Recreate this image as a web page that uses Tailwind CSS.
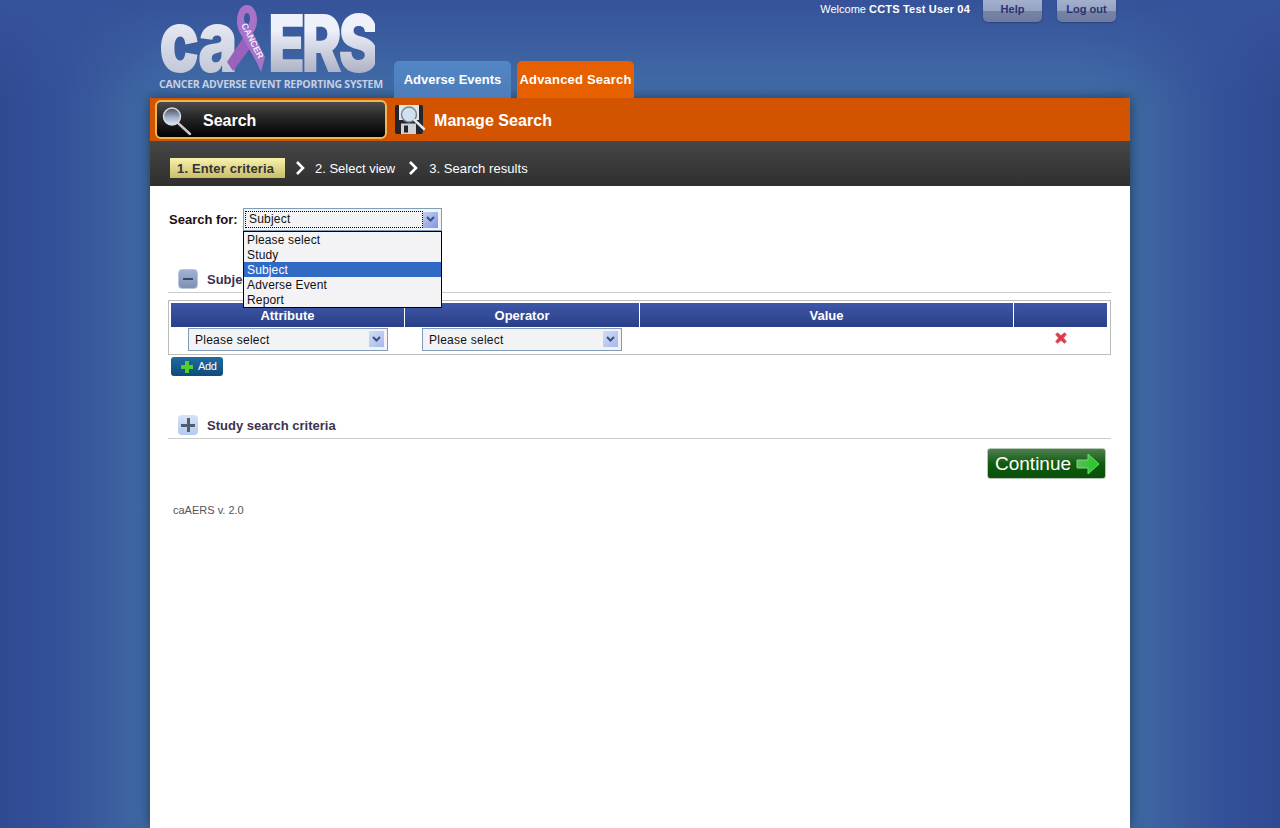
<!DOCTYPE html>
<html lang="en">

<head>
  <meta charset="UTF-8" />
  <meta name="viewport" content="width=device-width, initial-scale=1.0" />
  <title>caAERS - Advanced Search</title>
  <script src="https://cdn.jsdelivr.net/npm/@tailwindcss/browser@4"></script>
</head>

<body class="h-screen overflow-hidden font-['Liberation_Sans',Arial,sans-serif] bg-[linear-gradient(180deg,#36529a,#36529a00_105px),linear-gradient(90deg,#304a91_0,#33519a_60px,#3a5b9c_100px,#3f6aa5_150px,#4270a9_200px,#4270a9_1080px,#3f6aa5_1130px,#3a5b9c_1180px,#33519a_1220px,#304a91_1280px)]">
  <div class="w-[980px] mx-auto">

    <!-- header -->
    <div class="relative h-[98px] flex items-end pl-[244px]">
      <div class="absolute left-[9px] top-0 w-[226px] h-[94px] font-['Inter',sans-serif]">
        <span class="absolute left-0 top-[9px] origin-left scale-x-[0.78] text-[86px] leading-[64px] font-black tracking-[-3px] text-transparent bg-clip-text bg-[linear-gradient(180deg,#f0f2fa,#c3c8d8)]">ca</span>
        <span class="absolute left-[109px] top-[11px] origin-left scale-x-[0.76] text-[80px] leading-[64px] font-black tracking-[-5px] text-transparent bg-clip-text bg-[linear-gradient(180deg,#eef0fa_30%,#a9aec2)]">ERS</span>
        <svg class="absolute left-[67px] top-[5px]" width="40" height="68" viewBox="0 0 40 68">
          <path d="M19 30L1 57l6 9 18-24z" fill="#9a62bd" />
          <path fill-rule="evenodd" d="M21 0C14 0 11 8 11 17c0 4 1 7 3 11l17 30 4 9 4-15-12-24c3-5 4-8 4-13C31 7 27 0 21 0zm0 8c2 0 3 3 3 6s-2 6-3 9c-1-3-3-6-3-9s1-6 3-6z" fill="#a872c8" />
          <text x="0" y="0" transform="translate(15 20) rotate(63)" font-size="9" font-weight="700" fill="#f3eafa" font-family="Liberation Sans">CANCER</text>
        </svg>
        <div class="absolute left-0 top-[78px] w-[226px] text-[10.5px] leading-[13px] font-bold text-[#c8cfe0] whitespace-nowrap font-['Open_Sans',sans-serif] tracking-[-0.24px]">CANCER ADVERSE EVENT REPORTING SYSTEM</div>
      </div>

      <div class="absolute right-[14px] top-0 flex items-start text-[11px]">
        <span class="text-white leading-[18px] mr-[13px]">Welcome <b class="tracking-[0.2px]">CCTS Test User 04</b></span>
        <a class="w-[59px] h-[22px] mr-[15px] rounded-b-[5px] text-center font-bold leading-[19px] text-[#2d3170] bg-[linear-gradient(180deg,#a3b0cd_0,#95a3c4_48%,#77859f_50%,#6c7aa6_100%)] shadow-[0_1px_2px_#2a3f7a]">Help</a>
        <a class="w-[59px] h-[22px] rounded-b-[5px] text-center font-bold leading-[19px] text-[#2d3170] bg-[linear-gradient(180deg,#a3b0cd_0,#95a3c4_48%,#77859f_50%,#6c7aa6_100%)] shadow-[0_1px_2px_#2a3f7a]">Log out</a>
      </div>

      <div class="flex gap-[6px]">
        <a class="w-[117px] h-[37px] rounded-t-[5px] bg-[linear-gradient(180deg,#5286c6,#4d7db9)] text-white text-[13px] font-bold leading-[37px] text-center">Adverse Events</a>
        <a class="w-[117px] h-[37px] rounded-t-[5px] bg-[#e66000] text-white text-[13px] font-bold tracking-[0.2px] leading-[37px] text-center whitespace-nowrap">Advanced Search</a>
      </div>
    </div>

    <!-- main panel -->
    <div class="h-[730px] bg-white shadow-[0_0_12px_#1f3a55]">
      <div class="h-[43px] bg-[#d35400] flex items-center pl-[5px]">
        <div class="w-[232px] h-[39px] flex items-center rounded-[6px] border-2 border-[#f2b650] bg-[linear-gradient(180deg,#4c4c4c,#2a2a2a_40%,#000)]">
          <svg class="ml-[3px]" width="32" height="32" viewBox="0 0 32 32">
            <defs>
              <linearGradient id="lens" x1="0" y1="0" x2="0" y2="1">
                <stop offset="0" stop-color="#4a4f58" />
                <stop offset="0.55" stop-color="#9fb0c8" />
                <stop offset="1" stop-color="#dfe8f5" />
              </linearGradient>
            </defs>
            <line x1="18" y1="19" x2="30" y2="30" stroke="#c8c8c8" stroke-width="2.500" stroke-linecap="round" />
            <circle cx="12" cy="12.500" r="8.500" fill="url(#lens)" stroke="#d9dde2" stroke-width="1.500" />
          </svg>
          <span class="ml-[11px] mt-[2px] text-white text-[16px] font-bold">Search</span>
        </div>
        <svg class="ml-[7px]" width="34" height="32" viewBox="0 0 34 32">
          <rect x="1" y="1" width="28" height="29" rx="2" fill="#23262d" />
          <rect x="5" y="1" width="20" height="15" fill="#e4e6ea" />
          <rect x="7" y="19.500" width="15" height="10.500" fill="#cfd2d6" />
          <rect x="10" y="21.500" width="4" height="7" fill="#23262d" />
          <circle cx="15" cy="10.500" r="7.500" fill="#cfe0ef" stroke="#7d8894" stroke-width="1.500" />
          <line x1="20.500" y1="16" x2="30" y2="25" stroke="#e8e8e8" stroke-width="2.500" stroke-linecap="round" />
        </svg>
        <span class="ml-[6px] mt-[2px] text-white text-[16px] font-bold tracking-[0.05px]">Manage Search</span>
      </div>

      <div class="h-[45px] bg-[linear-gradient(180deg,#464646,#2f2f2f)] flex items-center pl-[20px] pt-[17px] pb-[8px] text-white text-[13px]">
        <span class="w-[115px] h-[20px] pl-[7px] font-bold tracking-[0.15px] leading-[21px] text-[#333] bg-[linear-gradient(180deg,#f8f2ad,#c9bd68)]">1. Enter criteria</span>
        <svg class="ml-[10px]" width="11" height="16" viewBox="0 0 11 16"><path d="M2 2l6 6-6 6" fill="none" stroke="#fff" stroke-width="2.600" /></svg>
        <span class="ml-[9px] mt-[1px]">2. Select view</span>
        <svg class="ml-[13px]" width="11" height="16" viewBox="0 0 11 16"><path d="M2 2l6 6-6 6" fill="none" stroke="#fff" stroke-width="2.600" /></svg>
        <span class="ml-[10px] mt-[1px] tracking-[0.06px]">3. Search results</span>
      </div>

      <div class="pl-[18px] pr-[19px]">
        <div class="relative flex items-center h-[23px] mt-[22px] ml-px">
          <span class="text-[13px] font-bold text-[#1c0f0f] w-[74px]">Search for:</span>
          <div class="w-[199px] h-[23px] border border-[#7f9db9] bg-[#f3f3f6] flex items-center pl-px pr-[3px]">
            <span class="flex-1 h-[17px] border border-dotted border-black text-[12px] leading-[15px] pl-[3px] text-[#111] tracking-[0.2px]">Subject</span>
            <span class="w-[15px] h-[16px] bg-[linear-gradient(135deg,#c4d0f2,#7f94e2)] flex items-center justify-center">
              <svg width="9" height="7" viewBox="0 0 9 7"><path d="M1 1l3.500 3.500L8 1" fill="none" stroke="#3d4e80" stroke-width="2" /></svg>
            </span>
          </div>
          <div class="absolute left-[74px] top-[23px] w-[199px] h-[77px] z-10 bg-[#f3f3f6] border border-black text-[12px] text-[#111] tracking-[0.15px]">
            <div class="h-[15px] leading-[16px] pl-[3px]">Please select</div>
            <div class="h-[15px] leading-[16px] pl-[3px]">Study</div>
            <div class="h-[15px] leading-[16px] pl-[3px] bg-[#316ac5] text-white">Subject</div>
            <div class="h-[15px] leading-[16px] pl-[3px]">Adverse Event</div>
            <div class="h-[15px] leading-[16px] pl-[3px]">Report</div>
          </div>
        </div>

        <div class="flex items-center h-[24px] mt-[38px] pl-[10px] pb-[3px] border-b border-[#ccc]">
          <span class="w-[20px] h-[20px] rounded-[4px] bg-[linear-gradient(180deg,#9fb2d4,#7f90b5)] border border-[#b7c5dc] flex items-center justify-center">
            <span class="w-[10px] h-[2px] bg-[#3d4660]"></span>
          </span>
          <span class="ml-[9px] mt-[1px] text-[13px] font-bold text-[#3b3350]">Subject search criteria</span>
        </div>

        <div class="mt-[7px] h-[55px] border border-[#bbb] pt-[2px] pl-[2px] pr-[3px]">
          <div class="flex h-[24px] text-white text-[13px] font-bold leading-[25px] text-center bg-[linear-gradient(180deg,#3d57a7,#2a3f88)]">
            <div class="w-[234px] border-r border-white">Attribute</div>
            <div class="w-[235px] border-r border-white">Operator</div>
            <div class="w-[374px] border-r border-white">Value</div>
            <div class="flex-1"></div>
          </div>
          <div class="flex items-center h-[24px] pl-[17px]">
            <div class="w-[200px] h-[23px] border border-[#7f9db9] bg-[#f3f3f6] flex items-center pl-[6px] pr-[3px] text-[12px] text-[#111] tracking-[0.25px]">
              <span class="flex-1 mt-px">Please select</span>
              <span class="w-[15px] h-[16px] bg-[linear-gradient(135deg,#d3def5,#a5b8ea)] flex items-center justify-center">
                <svg width="9" height="7" viewBox="0 0 9 7"><path d="M1 1l3.500 3.500L8 1" fill="none" stroke="#3d4e80" stroke-width="2" /></svg>
              </span>
            </div>
            <div class="ml-[34px] w-[200px] h-[23px] border border-[#7f9db9] bg-[#f3f3f6] flex items-center pl-[6px] pr-[3px] text-[12px] text-[#111] tracking-[0.25px]">
              <span class="flex-1 mt-px">Please select</span>
              <span class="w-[15px] h-[16px] bg-[linear-gradient(135deg,#d3def5,#a5b8ea)] flex items-center justify-center">
                <svg width="9" height="7" viewBox="0 0 9 7"><path d="M1 1l3.500 3.500L8 1" fill="none" stroke="#3d4e80" stroke-width="2" /></svg>
              </span>
            </div>
            <svg class="ml-[432px] mb-[3px]" width="14" height="14" viewBox="0 0 14 14"><path d="M2 3.500L3.500 2 7 5l3.500-3L12 3.500 9 7l3 3.500-1.500 1.500L7 9l-3.500 3L2 10.500 5 7z" fill="#e0323f" stroke="#d8545c" stroke-width="1.200" /></svg>
          </div>
        </div>

        <a class="mt-[2px] ml-[3px] w-[52px] h-[19px] rounded-[3px] bg-[linear-gradient(180deg,#1f6b9e,#104a7d)] flex items-center pl-[9px] text-white text-[11px] tracking-[-0.4px]">
          <svg width="14" height="14" viewBox="0 0 14 14"><path d="M5 1h4v4h4v4H9v4H5V9H1V5h4z" fill="#4fd02f" /></svg>
          <span class="ml-[4px]">Add</span>
        </a>

        <div class="flex items-center h-[24px] mt-[39px] pl-[10px] pb-[3px] border-b border-[#ccc]">
          <span class="w-[20px] h-[20px] rounded-[4px] bg-[linear-gradient(180deg,#d5e3f8,#b3cbf0)] flex items-center justify-center relative">
            <span class="w-[14px] h-[3px] bg-[#555c6e]"></span>
            <span class="absolute w-[3px] h-[14px] bg-[#555c6e]"></span>
          </span>
          <span class="ml-[9px] mt-[1px] text-[13px] font-bold text-[#3b3350]">Study search criteria</span>
        </div>

        <div class="flex justify-end mt-[9px] pr-[5px]">
          <a class="w-[119px] h-[31px] rounded-[3px] border border-[#b8c8b8] bg-[linear-gradient(180deg,#4f7f4f,#0f5c0f_50%,#0a4f0a)] flex items-center pl-[7px] text-white text-[19px] leading-none">
            Continue
            <svg class="ml-[5px]" width="24" height="22" viewBox="0 0 24 22">
              <defs>
                <linearGradient id="arrow" x1="0" y1="0" x2="1" y2="0">
                  <stop offset="0" stop-color="#5fb85f" />
                  <stop offset="1" stop-color="#18d018" />
                </linearGradient>
              </defs>
              <path d="M1 7h11V1l11 10-11 10v-6H1z" fill="url(#arrow)" stroke="#79d878" />
            </svg>
          </a>
        </div>

        <div class="mt-[23px] ml-[5px] text-[11px] text-[#555]">caAERS v. 2.0</div>
      </div>
    </div>
  </div>
</body>

</html>
